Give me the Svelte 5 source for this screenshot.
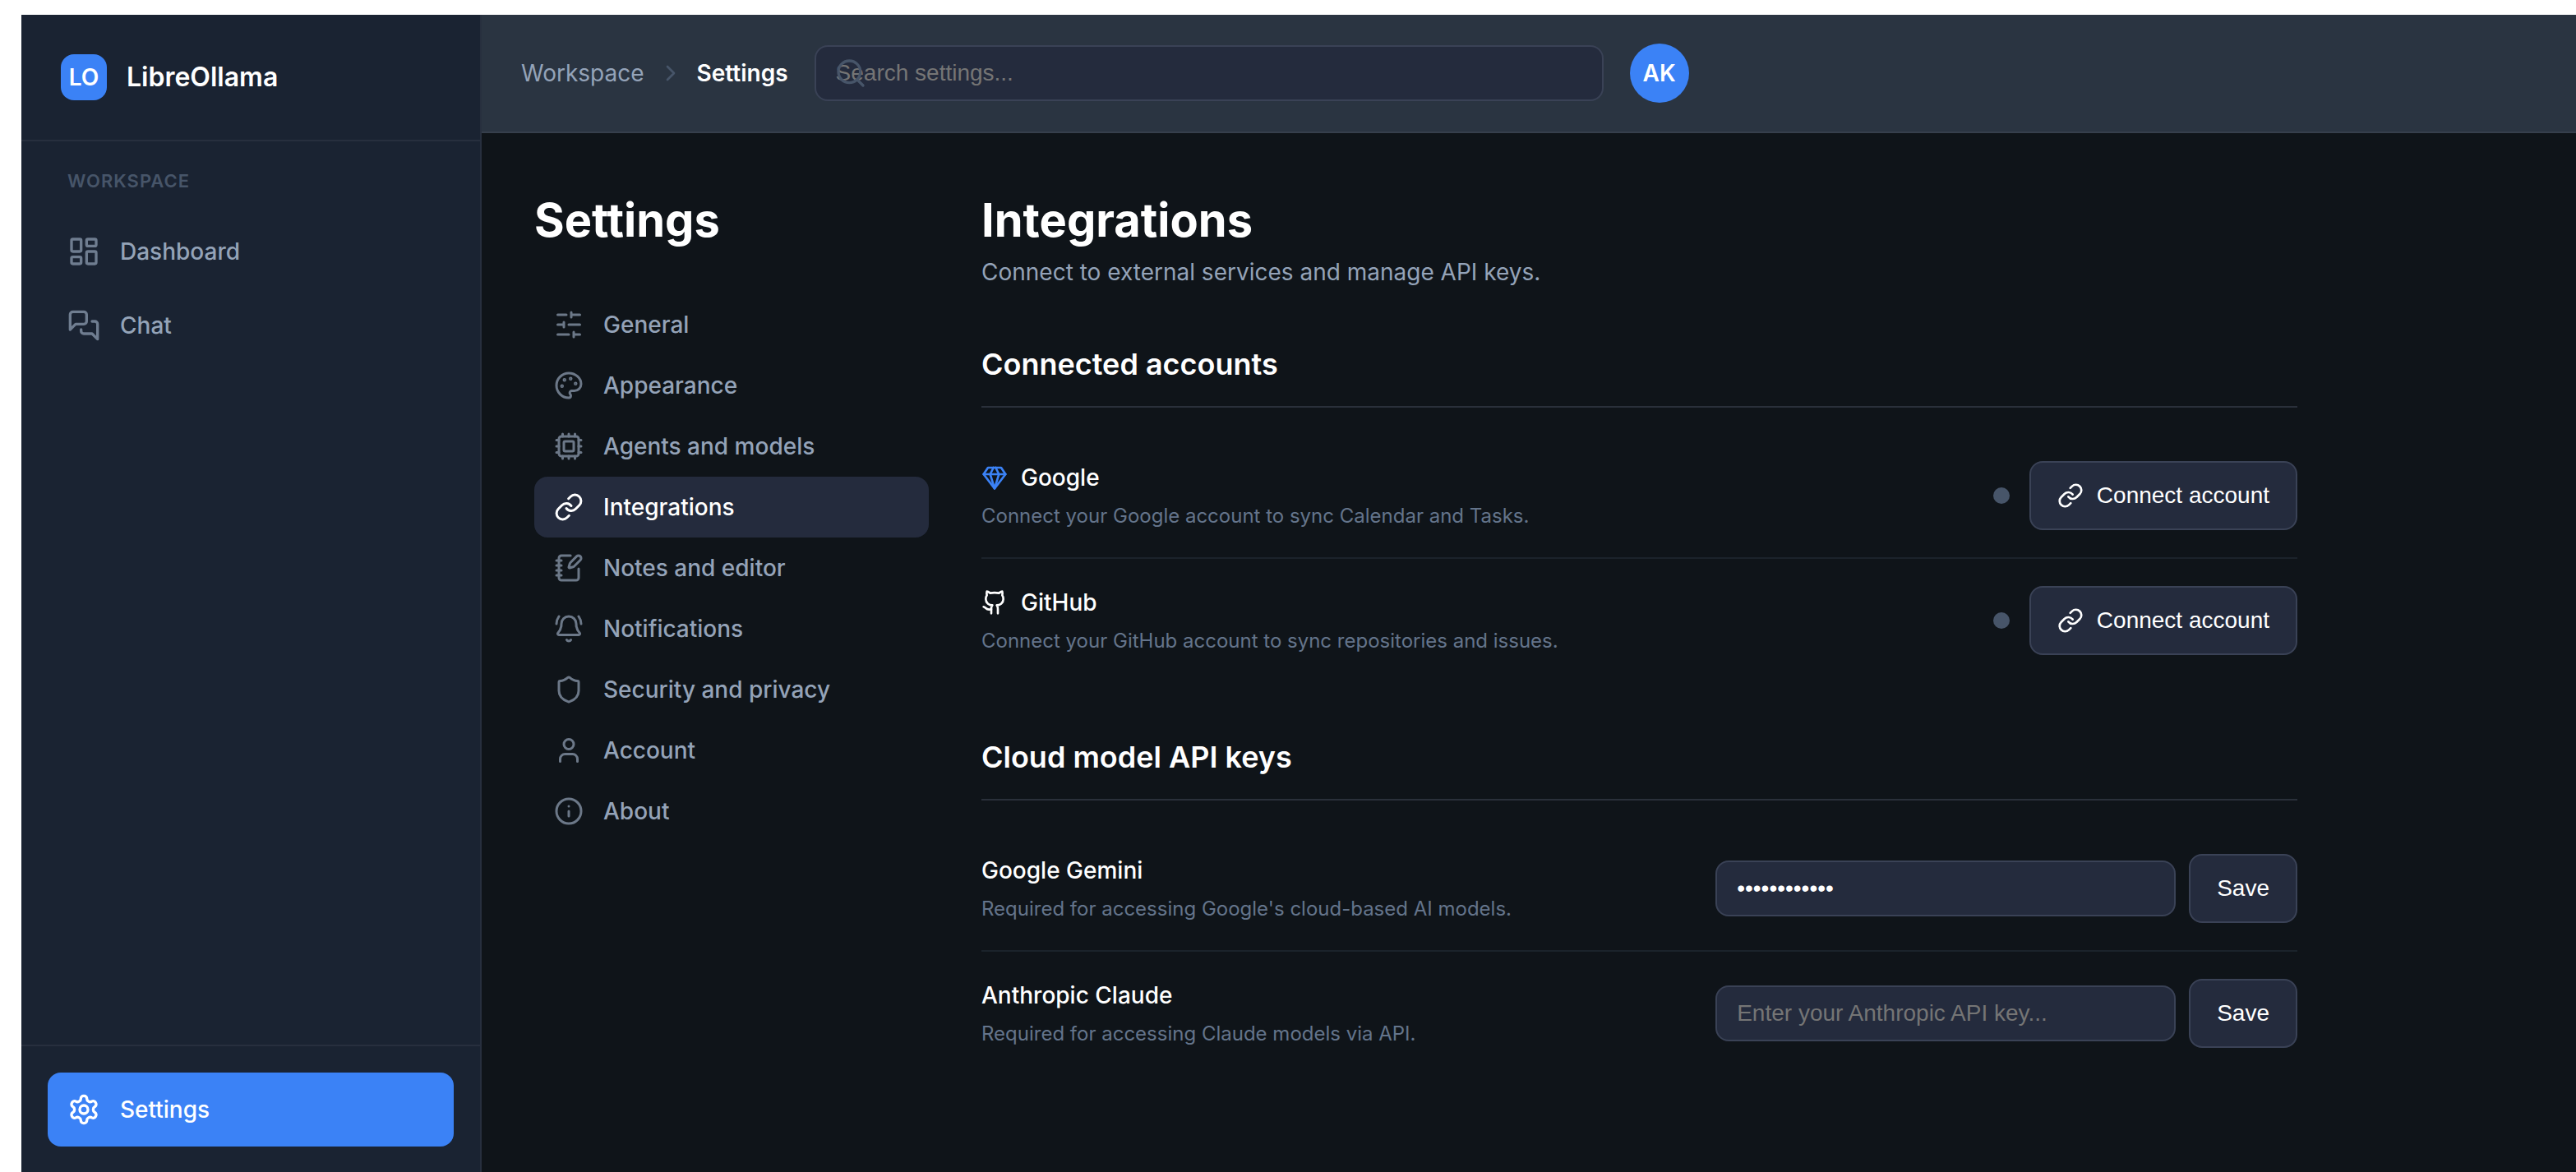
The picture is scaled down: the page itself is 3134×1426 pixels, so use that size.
<script>
  const icons = {
    dashboard:
      '<rect width="7" height="9" x="3" y="3" rx="1"/><rect width="7" height="5" x="14" y="3" rx="1"/><rect width="7" height="9" x="14" y="12" rx="1"/><rect width="7" height="5" x="3" y="16" rx="1"/>',
    chat:
      '<path d="M14 9a2 2 0 0 1-2 2H6l-4 4V4a2 2 0 0 1 2-2h8a2 2 0 0 1 2 2z"/><path d="M18 9h2a2 2 0 0 1 2 2v11l-4-4h-6a2 2 0 0 1-2-2v-1"/>',
    gear:
      '<path d="M12.22 2h-.44a2 2 0 0 0-2 2v.18a2 2 0 0 1-1 1.73l-.43.25a2 2 0 0 1-2 0l-.15-.08a2 2 0 0 0-2.73.73l-.22.38a2 2 0 0 0 .73 2.73l.15.1a2 2 0 0 1 1 1.72v.51a2 2 0 0 1-1 1.74l-.15.09a2 2 0 0 0-.73 2.73l.22.38a2 2 0 0 0 2.73.73l.15-.08a2 2 0 0 1 2 0l.43.25a2 2 0 0 1 1 1.73V20a2 2 0 0 0 2 2h.44a2 2 0 0 0 2-2v-.18a2 2 0 0 1 1-1.73l.43-.25a2 2 0 0 1 2 0l.15.08a2 2 0 0 0 2.73-.73l.22-.39a2 2 0 0 0-.73-2.73l-.15-.08a2 2 0 0 1-1-1.74v-.5a2 2 0 0 1 1-1.74l.15-.09a2 2 0 0 0 .73-2.73l-.22-.38a2 2 0 0 0-2.73-.73l-.15.08a2 2 0 0 1-2 0l-.43-.25a2 2 0 0 1-1-1.73V4a2 2 0 0 0-2-2z"/><circle cx="12" cy="12" r="3"/>',
    chevron: '<path d="m9 18 6-6-6-6"/>',
    search: '<circle cx="11" cy="11" r="8"/><path d="m21 21-4.3-4.3"/>',
    sliders:
      '<path d="M21 4h-7M10 4H3M21 12h-9M8 12H3M21 20h-5M12 20H3M14 2v4M8 10v4M16 18v4"/>',
    palette:
      '<circle cx="13.5" cy="6.5" r=".5" fill="currentColor"/><circle cx="17.5" cy="10.5" r=".5" fill="currentColor"/><circle cx="8.5" cy="7.5" r=".5" fill="currentColor"/><circle cx="6.5" cy="12.5" r=".5" fill="currentColor"/><path d="M12 2C6.5 2 2 6.5 2 12s4.5 10 10 10c.926 0 1.648-.746 1.648-1.688 0-.437-.18-.835-.437-1.125-.29-.289-.438-.652-.438-1.125a1.64 1.64 0 0 1 1.668-1.668h1.996c3.051 0 5.555-2.503 5.555-5.554C21.965 6.012 17.461 2 12 2z"/>',
    cpu:
      '<path d="M12 20v2M12 2v2M17 20v2M17 2v2M2 12h2M2 17h2M2 7h2M20 12h2M20 17h2M20 7h2M7 20v2M7 2v2"/><rect x="4" y="4" width="16" height="16" rx="2"/><rect x="8" y="8" width="8" height="8" rx="1"/>',
    link:
      '<path d="M10 13a5 5 0 0 0 7.54.54l3-3a5 5 0 0 0-7.07-7.07l-1.72 1.71"/><path d="M14 11a5 5 0 0 0-7.54-.54l-3 3a5 5 0 0 0 7.07 7.07l1.71-1.71"/>',
    notebook:
      '<path d="M13.4 2H6a2 2 0 0 0-2 2v16a2 2 0 0 0 2 2h12a2 2 0 0 0 2-2v-7.4"/><path d="M2 6h4M2 10h4M2 14h4M2 18h4"/><path d="M21.378 5.626a1 1 0 1 0-3.004-3.004l-5.01 5.012a2 2 0 0 0-.506.854l-.837 2.87a.5.5 0 0 0 .62.62l2.87-.837a2 2 0 0 0 .854-.506z"/>',
    bell:
      '<path d="M10.268 21a2 2 0 0 0 3.464 0"/><path d="M22 8c0-2.3-.8-4.3-2-6"/><path d="M3.262 15.326A1 1 0 0 0 4 17h16a1 1 0 0 0 .74-1.673C19.41 13.956 18 12.499 18 8A6 6 0 0 0 6 8c0 4.499-1.411 5.956-2.738 7.326"/><path d="M4 2C2.8 3.7 2 5.7 2 8"/>',
    shield:
      '<path d="M20 13c0 5-3.5 7.5-7.66 8.95a1 1 0 0 1-.67-.01C7.5 20.5 4 18 4 13V6a1 1 0 0 1 1-1c2 0 4.5-1.2 6.24-2.72a1.17 1.17 0 0 1 1.52 0C14.51 3.81 17 5 19 5a1 1 0 0 1 1 1z"/>',
    user:
      '<path d="M19 21v-2a4 4 0 0 0-4-4H9a4 4 0 0 0-4 4v2"/><circle cx="12" cy="7" r="4"/>',
    info: '<circle cx="12" cy="12" r="10"/><path d="M12 16v-4"/><path d="M12 8h.01"/>',
    gem:
      '<path d="M6 3h12l4 6-10 13L2 9Z"/><path d="M11 3 8 9l4 13 4-13-3-6"/><path d="M2 9h20"/>',
    github:
      '<path d="M15 22v-4a4.8 4.8 0 0 0-1-3.5c3 0 6-2 6-5.5.08-1.25-.27-2.48-1-3.5.28-1.15.28-2.35 0-3.5 0 0-1 0-3 1.5-2.64-.5-5.36-.5-8 0C6 2 5 2 5 2c-.3 1.15-.3 2.35 0 3.5A5.403 5.403 0 0 0 4 9c0 3.5 3 5.5 6 5.5-.39.49-.68 1.05-.85 1.65-.17.6-.22 1.23-.15 1.85v4"/><path d="M9 18c-4.51 2-5-2-7-2"/>',
  };

  const sections = [
    ['General', 'sliders'],
    ['Appearance', 'palette'],
    ['Agents and models', 'cpu'],
    ['Integrations', 'link'],
    ['Notes and editor', 'notebook'],
    ['Notifications', 'bell'],
    ['Security and privacy', 'shield'],
    ['Account', 'user'],
    ['About', 'info'],
  ];

  const accounts = [
    { name: 'Google', icon: 'gem', text: 'Connect your Google account to sync Calendar and Tasks.' },
    { name: 'GitHub', icon: 'github', text: 'Connect your GitHub account to sync repositories and issues.' },
  ];

  const keys = $state([
    {
      id: 'gemini',
      name: 'Google Gemini',
      text: "Required for accessing Google's cloud-based AI models.",
      placeholder: 'Enter your Gemini API key...',
      value: 'gemini-key-1',
    },
    {
      id: 'claude',
      name: 'Anthropic Claude',
      text: 'Required for accessing Claude models via API.',
      placeholder: 'Enter your Anthropic API key...',
      value: '',
    },
  ]);

  let active = $state('Integrations');
  let query = $state('');
</script>

{#snippet icon(name, size)}
  <svg class="icon {size}" viewBox="0 0 24 24" aria-hidden="true">{@html icons[name]}</svg>
{/snippet}

<div class="app">
  <aside class="sidebar">
    <div class="brand">
      <span class="logo">LO</span>
      <span class="brand-name">LibreOllama</span>
    </div>
    <nav class="workspace" aria-label="Workspace">
      <span class="group-label">WORKSPACE</span>
      <a class="side-link" href="#dashboard">{@render icon('dashboard', 'lg')}Dashboard</a>
      <a class="side-link" href="#chat">{@render icon('chat', 'lg')}Chat</a>
    </nav>
    <div class="side-foot">
      <a class="side-link current" href="#settings">{@render icon('gear', 'lg')}Settings</a>
    </div>
  </aside>

  <div class="page">
    <header class="topbar">
      <nav class="crumbs" aria-label="Breadcrumb">
        <a href="#workspace">Workspace</a>
        {@render icon('chevron', 'sm')}
        <span class="here">Settings</span>
      </nav>
      <div class="search">
        <input
          class="field"
          type="text"
          aria-label="Search settings"
          placeholder="Search settings..."
          bind:value={query}
        />
        {@render icon('search', 'lg')}
      </div>
      <button class="avatar" type="button" aria-label="Account AK">AK</button>
    </header>

    <div class="body">
      <div class="settings-nav">
        <h1>Settings</h1>
        <nav aria-label="Settings sections">
          {#each sections as [label, glyph]}
            <button
              type="button"
              class="nav-item"
              class:active={active === label}
              onclick={() => (active = label)}
            >
              {@render icon(glyph, 'md')}{label}
            </button>
          {/each}
        </nav>
      </div>

      <main class="content">
        <header>
          <h1>Integrations</h1>
          <p class="lead">Connect to external services and manage API keys.</p>
        </header>

        <section>
          <h2>Connected accounts</h2>
          {#each accounts as account}
            <div class="row">
              <div class="info">
                <h3 class={account.icon}>{@render icon(account.icon, 'sm')}{account.name}</h3>
                <p>{account.text}</p>
              </div>
              <div class="connect">
                <span class="status"></span>
                <button type="button" class="btn">{@render icon('link', 'sm')}Connect account</button>
              </div>
            </div>
          {/each}
        </section>

        <section>
          <h2>Cloud model API keys</h2>
          {#each keys as key}
            <div class="row">
              <div class="info">
                <h3><label for={key.id}>{key.name}</label></h3>
                <p>{key.text}</p>
              </div>
              <div class="key">
                <input
                  id={key.id}
                  class="field"
                  type="password"
                  autocomplete="off"
                  placeholder={key.placeholder}
                  bind:value={key.value}
                />
                <button type="button" class="btn">Save</button>
              </div>
            </div>
          {/each}
        </section>
      </main>
    </div>
  </div>
</div>

<style>
  :global(body) {
    background: #ffffff;
    overflow: hidden;
  }

  .app {
    --bg: #0f1419;
    --panel: #1a2332;
    --control: #242b3d;
    --bar: #2a3441;
    --accent: #3b82f6;
    --text: #ffffff;
    --text-soft: #94a3b8;
    --text-dim: #64748b;
    --muted: #475569;
    --edge: #3a4256;
    --line: #2a303a;
    --line-soft: #1b232b;
    display: flex;
    min-height: calc(100vh - 17px);
    margin: 18px 0 0 26px;
    background: var(--bg);
    color: var(--text);
    font-family: Inter, 'Liberation Sans', sans-serif;
    font-size: 28px;
    line-height: 42px;
  }

  .app :global(*) {
    box-sizing: border-box;
  }

  h1,
  h2,
  h3,
  p {
    margin: 0;
  }

  h1 {
    font-size: 56px;
    line-height: 84px;
    font-weight: 700;
  }

  a {
    color: inherit;
    text-decoration: none;
  }

  .icon {
    flex: none;
    fill: none;
    stroke: currentColor;
    stroke-width: 2;
    stroke-linecap: round;
    stroke-linejoin: round;
  }

  .sm {
    width: 32px;
    height: 32px;
  }

  .md {
    width: 36px;
    height: 36px;
  }

  .lg {
    width: 40px;
    height: 40px;
  }

  .sidebar {
    display: flex;
    flex: none;
    flex-direction: column;
    width: 560px;
    background: var(--panel);
    border-right: 2px solid rgba(255, 255, 255, 0.06);
  }

  .brand {
    display: flex;
    align-items: center;
    gap: 24px;
    padding: 48px;
    border-bottom: 2px solid rgba(255, 255, 255, 0.06);
  }

  .logo {
    display: grid;
    place-items: center;
    width: 56px;
    height: 56px;
    border-radius: 16px;
    background: var(--accent);
    font-weight: 600;
  }

  .brand-name {
    font-size: 32px;
    font-weight: 600;
  }

  .workspace {
    display: flex;
    flex: 1;
    flex-direction: column;
    padding: 32px;
  }

  .group-label {
    margin-bottom: 24px;
    padding: 0 24px;
    color: var(--muted);
    font-size: 22px;
    line-height: 33px;
    font-weight: 600;
    letter-spacing: 1px;
  }

  .side-link {
    display: flex;
    align-items: center;
    gap: 24px;
    padding: 24px;
    border-radius: 16px;
    color: var(--text-soft);
    font-weight: 500;
  }

  .side-link .icon {
    opacity: 0.7;
  }

  .side-link.current {
    background: var(--accent);
    color: var(--text);
  }

  .side-link.current .icon {
    opacity: 1;
  }

  .side-foot {
    padding: 32px;
    border-top: 2px solid rgba(255, 255, 255, 0.06);
  }

  .page {
    flex: 1;
    min-width: 0;
  }

  .topbar {
    display: flex;
    align-items: center;
    gap: 32px;
    height: 144px;
    padding: 0 48px;
    background: var(--bar);
    border-bottom: 2px solid rgba(255, 255, 255, 0.06);
  }

  .crumbs {
    display: flex;
    align-items: center;
    gap: 16px;
    color: var(--text-soft);
  }

  .crumbs .icon {
    color: var(--muted);
  }

  .here {
    color: var(--text);
    font-weight: 600;
  }

  .search {
    position: relative;
    flex: 0 1 960px;
  }

  .search .icon {
    position: absolute;
    top: 14px;
    left: 24px;
    color: var(--muted);
    pointer-events: none;
  }

  .field {
    display: block;
    width: 100%;
    padding: 16px 24px;
    border: 2px solid var(--edge);
    border-radius: 16px;
    outline: none;
    background: var(--control);
    color: var(--text);
    font-family: 'Liberation Sans', Arial, sans-serif;
    font-size: 28px;
    line-height: 32px;
  }

  .field::placeholder {
    color: #757575;
  }

  .avatar {
    width: 72px;
    height: 72px;
    padding: 0;
    border: 0;
    border-radius: 50%;
    background: var(--accent);
    color: var(--text);
    font: inherit;
    font-weight: 600;
  }

  .body {
    display: flex;
    gap: 64px;
    padding: 64px;
  }

  .settings-nav {
    display: flex;
    flex: none;
    flex-direction: column;
    gap: 48px;
    width: 480px;
  }

  .nav-item {
    display: flex;
    align-items: center;
    gap: 24px;
    width: 100%;
    padding: 16px 24px;
    border: 0;
    border-radius: 16px;
    background: transparent;
    color: var(--text-soft);
    font: inherit;
    font-weight: 500;
    text-align: left;
  }

  .nav-item .icon {
    opacity: 0.7;
  }

  .nav-item.active {
    background: var(--control);
    color: var(--text);
  }

  .nav-item.active .icon {
    opacity: 1;
  }

  .content {
    display: flex;
    flex: 0 1 1601px;
    flex-direction: column;
    gap: 64px;
    min-width: 0;
  }

  .lead {
    color: var(--text-soft);
  }

  h2 {
    margin-bottom: 32px;
    padding-bottom: 24px;
    border-bottom: 2px solid var(--line);
    font-size: 36px;
    line-height: 54px;
    font-weight: 600;
  }

  .row {
    display: flex;
    align-items: center;
    justify-content: space-between;
    gap: 32px;
    padding: 32px 0;
    border-bottom: 2px solid var(--line-soft);
  }

  .row:last-child {
    border-bottom: 0;
  }

  .info {
    display: grid;
    gap: 8px;
  }

  h3 {
    display: flex;
    align-items: center;
    gap: 16px;
    font-size: 28px;
    font-weight: 500;
  }

  .gem .icon {
    color: var(--accent);
  }

  .info p {
    color: var(--text-dim);
    font-size: 24px;
    line-height: 36px;
  }

  .connect {
    display: flex;
    align-items: center;
    gap: 24px;
  }

  .status {
    width: 20px;
    height: 20px;
    border-radius: 50%;
    background: var(--muted);
  }

  .key {
    display: flex;
    align-items: center;
    gap: 16px;
  }

  .key .field {
    width: 560px;
  }

  .btn {
    display: flex;
    align-items: center;
    gap: 16px;
    padding: 24px 32px;
    border: 2px solid var(--edge);
    border-radius: 16px;
    background: var(--control);
    color: var(--text);
    font-family: 'Liberation Sans', Arial, sans-serif;
    font-size: 28px;
    line-height: 32px;
  }
</style>
